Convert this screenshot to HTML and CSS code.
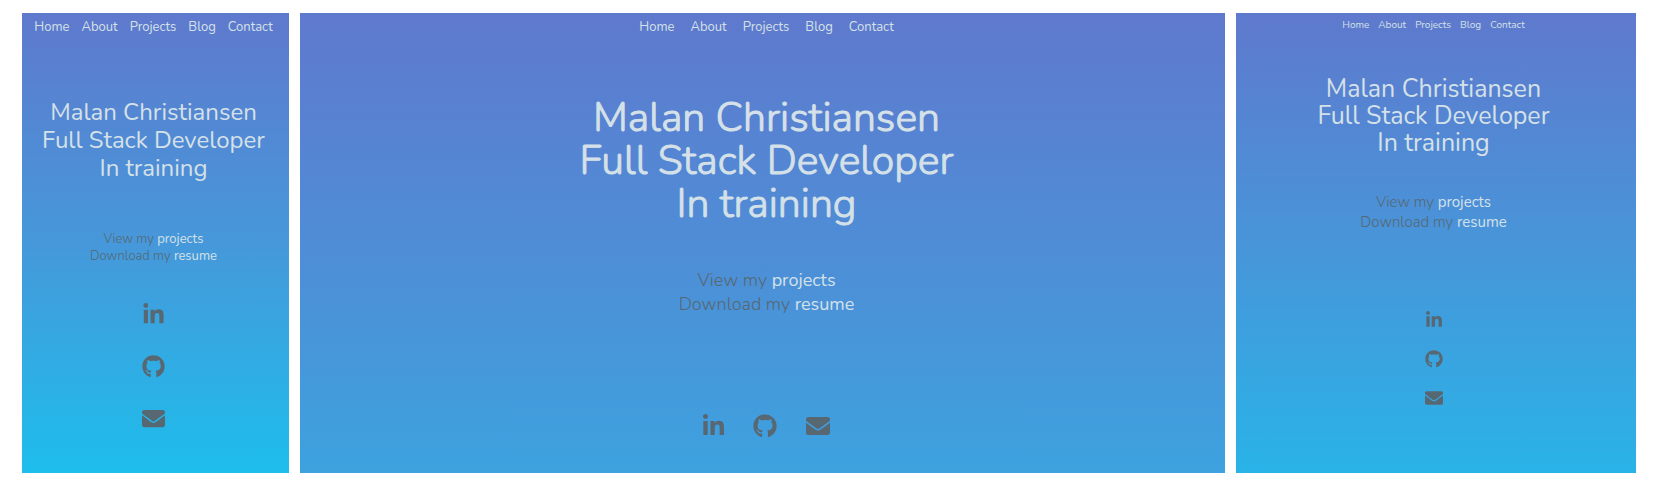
FILE: index.html
```html
<!DOCTYPE html>
<html lang="en">
<head>
<meta charset="utf-8">
<meta name="viewport" content="width=device-width, initial-scale=1">
<title>Malan Christiansen</title>
<link rel="stylesheet" href="styles.css">
</head>
<body>
<svg class="sprite" aria-hidden="true">
  <symbol id="linkedin" viewBox="0 0 448 512"><path d="M100.28 448H7.4V148.9h92.88zM53.79 108.1C24.09 108.1 0 83.5 0 53.8a53.79 53.79 0 0 1 107.58 0c0 29.7-24.1 54.3-53.79 54.3zM447.9 448h-92.68V302.4c0-34.7-.7-79.2-48.29-79.2-48.29 0-55.69 37.7-55.69 76.7V448h-92.78V148.9h89.08v40.8h1.3c12.4-23.5 42.69-48.3 87.88-48.3 94 0 111.28 61.9 111.28 142.3V448z"/></symbol>
  <symbol id="github" viewBox="0 0 496 512"><path d="M165.9 397.4c0 2-2.3 3.6-5.2 3.6-3.3.3-5.6-1.3-5.6-3.6 0-2 2.3-3.6 5.2-3.6 3-.3 5.6 1.3 5.6 3.6zM244.8 8C106.1 8 0 113.3 0 252c0 110.9 69.8 205.8 169.5 239.2 12.8 2.3 17.3-5.6 17.3-12.1 0-6.2-.3-40.4-.3-61.4 0 0-70 15-84.7-29.8 0 0-11.4-29.1-27.8-36.6 0 0-22.9-15.7 1.6-15.4 0 0 24.9 2 38.6 25.8 21.9 38.6 58.6 27.5 72.9 20.9 2.3-16 8.8-27.1 16-33.7-55.9-6.2-112.3-14.3-112.3-110.5 0-27.5 7.6-41.3 23.6-58.9-2.6-6.5-11.1-33.3 2.6-67.9 20.9-6.5 69 27 69 27 20-5.6 41.5-8.5 62.8-8.5s42.8 2.9 62.8 8.5c0 0 48.1-33.6 69-27 13.7 34.7 5.2 61.4 2.6 67.9 16 17.7 25.8 31.5 25.8 58.9 0 96.5-58.9 104.2-114.8 110.5 9.2 7.9 17 22.9 17 46.4 0 33.7-.3 75.4-.3 83.6 0 6.5 4.6 14.4 17.3 12.1C428.2 457.8 496 362.9 496 252 496 113.3 383.5 8 244.8 8z"/></symbol>
  <symbol id="envelope" viewBox="0 0 512 512"><path d="M502.3 190.8c3.9-3.1 9.7-.2 9.7 4.7V400c0 26.5-21.5 48-48 48H48c-26.5 0-48-21.5-48-48V195.6c0-5 5.7-7.8 9.7-4.7 22.4 17.4 52.1 39.5 154.1 113.6 21.1 15.4 56.7 47.8 92.2 47.6 35.7.3 72-32.8 92.3-47.6 102-74.1 131.6-96.3 154-113.7zM256 320c23.2.4 56.6-29.2 73.4-41.4 132.7-96.3 142.8-104.7 173.4-128.7 5.8-4.5 9.2-11.5 9.2-18.9v-19c0-26.5-21.5-48-48-48H48c-26.5 0-48 21.5-48 48v19c0 7.4 3.4 14.3 9.2 18.9 30.6 23.9 40.7 32.4 173.4 128.7 16.8 12.2 50.2 41.8 73.4 41.4z"/></symbol>
</svg>
<main class="previews">
  <section class="screen screen-phone">
    <nav class="nav"><a href="#">Home</a><a href="#">About</a><a href="#">Projects</a><a href="#">Blog</a><a href="#">Contact</a></nav>
    <h1 class="title">Malan Christiansen<br>Full Stack Developer<br>In training</h1>
    <p class="intro">View my <a href="#">projects</a><br>Download my <a href="#">resume</a></p>
    <div class="social">
      <a href="#" aria-label="LinkedIn"><svg class="icon icon-linkedin"><use href="#linkedin"/></svg></a>
      <a href="#" aria-label="GitHub"><svg class="icon"><use href="#github"/></svg></a>
      <a href="#" aria-label="Email"><svg class="icon"><use href="#envelope"/></svg></a>
    </div>
  </section>
  <section class="screen screen-desktop">
    <nav class="nav"><a href="#">Home</a><a href="#">About</a><a href="#">Projects</a><a href="#">Blog</a><a href="#">Contact</a></nav>
    <h1 class="title">Malan Christiansen<br>Full Stack Developer<br>In training</h1>
    <p class="intro">View my <a href="#">projects</a><br>Download my <a href="#">resume</a></p>
    <div class="social">
      <a href="#" aria-label="LinkedIn"><svg class="icon icon-linkedin"><use href="#linkedin"/></svg></a>
      <a href="#" aria-label="GitHub"><svg class="icon"><use href="#github"/></svg></a>
      <a href="#" aria-label="Email"><svg class="icon"><use href="#envelope"/></svg></a>
    </div>
  </section>
  <section class="screen screen-tablet">
    <nav class="nav"><a href="#">Home</a><a href="#">About</a><a href="#">Projects</a><a href="#">Blog</a><a href="#">Contact</a></nav>
    <h1 class="title">Malan Christiansen<br>Full Stack Developer<br>In training</h1>
    <p class="intro">View my <a href="#">projects</a><br>Download my <a href="#">resume</a></p>
    <div class="social">
      <a href="#" aria-label="LinkedIn"><svg class="icon icon-linkedin"><use href="#linkedin"/></svg></a>
      <a href="#" aria-label="GitHub"><svg class="icon"><use href="#github"/></svg></a>
      <a href="#" aria-label="Email"><svg class="icon"><use href="#envelope"/></svg></a>
    </div>
  </section>
</main>
</body>
</html>
```

FILE: styles.css
```css
* {
  box-sizing: border-box;
}

body {
  margin: 0;
  background: #fff;
  font-family: Nunito, Lato, sans-serif;
  font-weight: 400;
}

a {
  color: #d5e1e8;
  text-decoration: none;
}

.sprite {
  display: none;
}

.previews {
  display: grid;
  grid-template-columns: 267fr 925fr 400fr;
  gap: 11px;
  min-height: 100vh;
  padding: 13px 20px 21px 22px;
}

.screen {
  display: flex;
  flex-direction: column;
  align-items: center;
  min-width: 0;
  padding-top: 4px;
  padding-bottom: 24px;
}

.nav {
  display: flex;
  gap: 16px;
  font-size: 13px;
  line-height: 20px;
}

.title {
  margin: 0;
  color: #d5e1e8;
  font-weight: 400;
  text-align: center;
  white-space: nowrap;
}

.intro {
  margin: 0;
  color: #576872;
  font-weight: 300;
  text-align: center;
}

.intro a {
  font-weight: 400;
}

.social {
  display: flex;
  flex-direction: column;
  align-items: center;
}

.social a {
  display: block;
  color: #576872;
}

.icon {
  display: block;
  width: 1em;
  height: 1em;
  fill: currentColor;
}

.screen-phone {
  padding-right: 4px;
  background: linear-gradient(to bottom, #5f79cd, #4698da 50%, #1dbeec);
}

.screen-phone .nav {
  gap: 12px;
}

.screen-phone .title {
  margin-top: 61px;
  font-size: 24px;
  line-height: 28px;
}

.screen-phone .intro {
  margin-top: 49px;
  font-size: 13px;
  line-height: 17px;
}

.screen-phone .social {
  gap: 29px;
  margin-top: 38px;
  font-size: 23px;
}

.screen-desktop {
  padding-left: 8px;
  background: linear-gradient(to bottom, #5f79cd, #4f8dd6 50%, #3da2df);
}

.screen-desktop .title {
  margin-top: 59px;
  font-size: 41px;
  font-weight: 300;
  line-height: 43px;
  -webkit-text-stroke: 1px #d5e1e8;
}

.screen-desktop .intro {
  margin-top: 43px;
  font-size: 18px;
  line-height: 24px;
}

.screen-desktop .social {
  flex-direction: row;
  gap: 29px;
  margin-top: 98px;
  font-size: 24px;
}

.screen-desktop .icon-linkedin {
  width: 21px;
}

.screen-tablet {
  padding-right: 5px;
  background: linear-gradient(to bottom, #5f79cd, #4895d9 50%, #29b3e7);
}

.screen-tablet .nav {
  gap: 9px;
  font-size: 10px;
  line-height: 16px;
}

.screen-tablet .title {
  margin-top: 43px;
  font-size: 25px;
  line-height: 27px;
}

.screen-tablet .intro {
  margin-top: 35px;
  font-size: 15px;
  line-height: 20px;
}

.screen-tablet .social {
  gap: 21px;
  margin-top: 79px;
  font-size: 18px;
}
```
